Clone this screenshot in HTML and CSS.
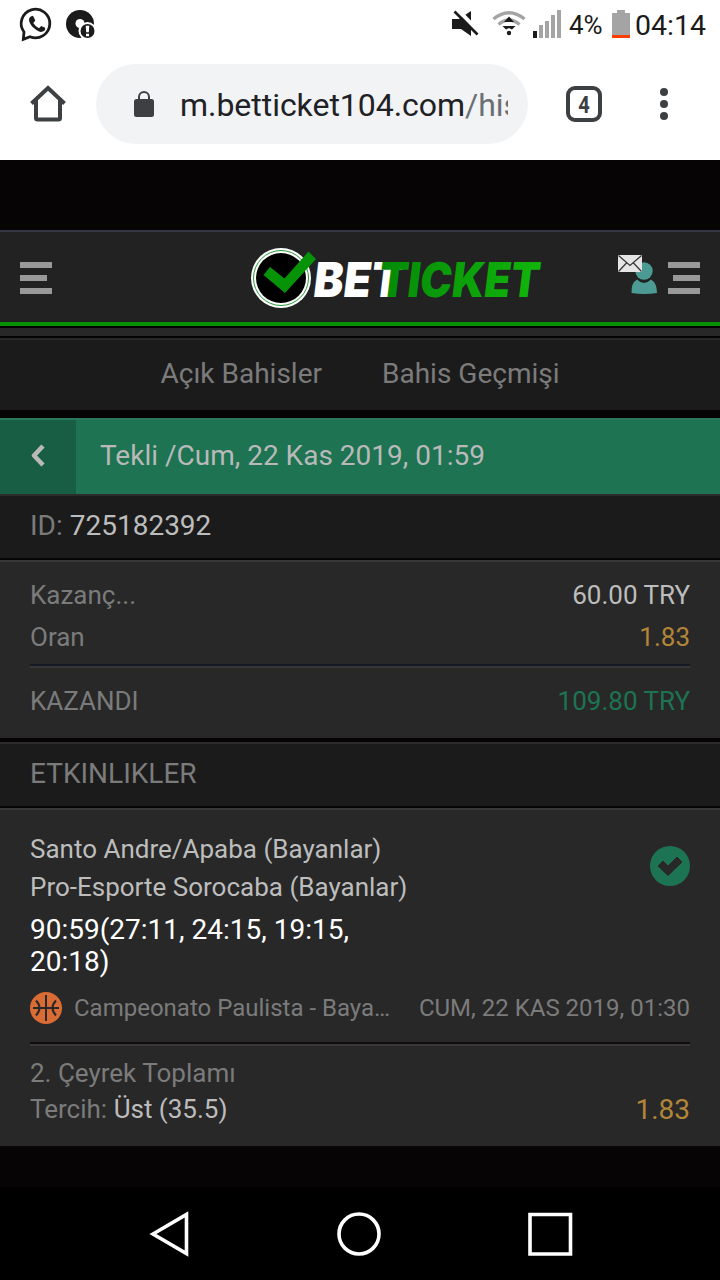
FILE: index.html
```html
<!DOCTYPE html>
<html lang="tr">
<head>
<meta charset="utf-8">
<title>Betticket</title>
<link rel="stylesheet" href="styles.css">
</head>
<body>
<div class="status">
  <svg class="status-left" width="110" height="48" viewBox="-1 0 110 48">
    <path d="M23 32A14.3 14.3 0 1 1 29 36.7L22.3 39.3Z" fill="none" stroke="#1b1b1b" stroke-width="2.8"/>
    <path d="M29 17.2l2-1.5q1 0 1.500 1l1.800 3.800-2 2.600q2 3.700 5.700 5.200l2.200-2.400 4 1.800q.5 4-4.500 4.200C34 30.500 28 24 28 20Q28 18 29 17.200Z" fill="#1b1b1b"/>
    <circle cx="79" cy="24" r="14" fill="#1b1b1b"/>
    <circle cx="79" cy="23.500" r="4.500" fill="#fff"/>
    <path d="M79 23.500l6 6" stroke="#fff" stroke-width="5"/>
    <circle cx="86.500" cy="31" r="9" fill="#fff"/>
    <circle cx="86.500" cy="31" r="7" fill="#1b1b1b"/>
    <path d="M84.700 25.800h3.600l-.5 6.500h-2.600zM85 33.800h3v2.500h-3z" fill="#fff"/>
  </svg>
  <svg class="status-right" width="118" height="48" viewBox="450 0 118 48">
    <path d="M452 19h7l12-8v25l-10-7h-9Z" fill="#1b1b1b"/>
    <path d="M457.500 9.500L480 33" stroke="#fff" stroke-width="4"/>
    <path d="M454.500 11.500L477.500 34.500" stroke="#1b1b1b" stroke-width="2.600"/>
    <path d="M493.500 19Q509 6.500 524.500 19M498.500 24.500Q509 15.500 519.500 24.500" fill="none" stroke="#a4a4a4" stroke-width="3.400"/>
    <path d="M509 16.500l5 5.500h-10Z" fill="#1b1b1b"/>
    <path d="M502.500 26h13l-3.500 3.500-3-1.500-3 1.500Z" fill="#1b1b1b"/>
    <circle cx="509" cy="33" r="2.200" fill="#1b1b1b"/>
    <path d="M533 31h4v7h-4z" fill="#1b1b1b"/>
    <path d="M539 25h4v13h-4zM545 21h4v17h-4zM551 15h4v23h-4zM557 10h4v28h-4z" fill="#a4a4a4"/>
  </svg>
  <span class="percent">4%</span>
  <svg class="battery" width="18" height="48" viewBox="0 0 18 48"><path d="M5 10h8v3h5v22H0V13h5Z" fill="#a4a4a4"/><path d="M0 35h18v3H0z" fill="#ff3d00"/></svg>
  <span class="clock">04:14</span>
</div>
<div class="toolbar">
  <svg class="home" width="36" height="38" viewBox="0 0 36 38"><path d="M1.500 19.500L18 4 34.500 19.500M6 16V34q0 1.500 1.500 1.500h21q1.500 0 1.500-1.500V16" fill="none" stroke="#3c4043" stroke-width="4"/></svg>
  <div class="address">
    <svg class="lock" width="20" height="28" viewBox="0 0 20 28"><rect y="9" width="20" height="18" rx="2.500" fill="#3c4043"/><path d="M5 10V7a5 5 0 0 1 10 0v3" fill="none" stroke="#3c4043" stroke-width="2"/></svg>
    <div class="url">m.betticket104.com<span class="path">/history</span></div>
  </div>
  <svg class="tab-count" width="36" height="36" viewBox="0 0 36 36"><rect x="2" y="2" width="32" height="32" rx="7" fill="none" stroke="#3c4043" stroke-width="4"/><text class="tab-number" x="12.300" y="27" textLength="11.500" lengthAdjust="spacingAndGlyphs">4</text></svg>
  <svg class="more" width="8" height="36" viewBox="0 0 8 36"><circle cx="4" cy="6" r="4"/><circle cx="4" cy="18" r="4"/><circle cx="4" cy="30" r="4"/></svg>
</div>
<main class="page">
  <header class="site-header">
    <svg width="32" height="32" viewBox="0 0 32 32"><path d="M0 0h32v6H0zM0 13h27v6H0zM0 26h32v6H0z" fill="#999"/></svg>
    <svg class="logo" width="294" height="64" viewBox="250 246 294 64">
      <defs><linearGradient id="leaf" gradientUnits="userSpaceOnUse" x1="65" y1="0" x2="229" y2="0"><stop offset="0" stop-color="#058a08"/><stop offset="1" stop-color="#11b60b"/></linearGradient></defs>
      <circle cx="281" cy="278" r="30" fill="#fff"/>
      <circle cx="281" cy="278" r="27.500" fill="none" stroke="#279b35" stroke-width="1"/>
      <circle cx="281" cy="278" r="25" fill="#000"/>
      <path d="M263.500 275L270 267l14.500 11.500 24-27 7.500 7.500-31 34Z" fill="#079307"/>
      <g transform="translate(313 297) skewX(-7)">
        <text class="word" x="-1" y="0" textLength="88" lengthAdjust="spacingAndGlyphs" fill="#fff">BET</text>
        <text class="word" x="64" y="0" textLength="161" lengthAdjust="spacingAndGlyphs" fill="url(#leaf)">TICKET</text>
      </g>
    </svg>
    <svg class="account" width="84" height="44" viewBox="617 252 84 44">
      <circle cx="644" cy="271" r="8.700" fill="#4b9b94"/>
      <path d="M631.500 293q-.5-10 5.500-13.500 7 7 14 0 6 3.500 6 13.500-12.500 2-25.500 0Z" fill="#4b9b94"/>
      <rect x="618" y="255" width="24" height="17" fill="#e5e5e5"/>
      <path d="M618.500 255.500L630 265.500 641.500 255.500M618.500 271.500l8-8.500M641.500 271.500l-8-8.500" fill="none" stroke="#333" stroke-width="1.200"/>
      <path d="M668 262h32v6h-32zM673 275h27v6h-27zM668 288h32v6h-32z" fill="#999"/>
    </svg>
  </header>
  <div class="strip"></div>
  <nav class="tabs"><span class="open-bets">Açık Bahisler</span><span class="history">Bahis Geçmişi</span></nav>
  <div class="ticket-bar">
    <div class="back"><svg width="16" height="24" viewBox="0 0 16 24"><path d="M13 2L4 11.500 13 21" fill="none" stroke="#b9b9b9" stroke-width="4.600" stroke-linejoin="round"/></svg></div>
    <div class="ticket-title">Tekli /Cum, 22 Kas 2019, 01:59</div>
  </div>
  <div class="caption id-row"><span>ID: <b>725182392</b></span></div>
  <section class="summary">
    <div class="line"><span>Kazanç...</span><span class="bright">60.00 TRY</span></div>
    <div class="line"><span>Oran</span><span class="gold">1.83</span></div>
    <div class="rule navy"></div>
    <div class="line total"><span>KAZANDI</span><span class="green">109.80 TRY</span></div>
  </section>
  <div class="caption events"><span>ETKINLIKLER</span></div>
  <section class="event">
    <div class="match">
      <div class="teams">
        <div class="team">Santo Andre/Apaba (Bayanlar)</div>
        <div class="team">Pro-Esporte Sorocaba (Bayanlar)</div>
        <div class="score">90:59(27:11, 24:15, 19:15, 20:18)</div>
      </div>
      <svg class="won" width="40" height="40" viewBox="0 0 40 40"><circle cx="20" cy="20" r="20" fill="#1d7453"/><path d="M8 20l5-5 5 5 9-9 5 5L18 29.500Z" fill="#282828" stroke="#282828" stroke-linejoin="round"/></svg>
    </div>
    <div class="league">
      <svg width="32" height="32" viewBox="0 0 32 32"><circle cx="16" cy="16" r="16" fill="#d96b35"/><path d="M16 3v26M3 16h26M6 8.500q7 7.500 0 15M26 8.500q-7 7.500 0 15" fill="none" stroke="#282828" stroke-width="2"/></svg>
      <span class="league-name">Campeonato Paulista - Baya…</span>
      <span class="date">CUM, 22 KAS 2019, 01:30</span>
    </div>
    <div class="rule"></div>
    <div class="market">2. Çeyrek Toplamı</div>
    <div class="line pick"><span>Tercih: <span class="bright">Üst (35.5)</span></span><span class="gold odds">1.83</span></div>
  </section>
</main>
<div class="system-nav">
  <svg width="720" height="93" viewBox="0 0 720 93" fill="none" stroke="#fff" stroke-width="3.600"><path d="M153 47L186.500 27.500V66.500Z"/><circle cx="359" cy="47" r="20"/><path d="M530 27.500h40.500V67H530Z"/></svg>
</div>
</body>
</html>
```
FILE: styles.css
```css
* { box-sizing: border-box; }
body { margin: 0; width: 720px; height: 1280px; overflow: hidden; background: #060405; color: #7b7b7b; font-family: Roboto, sans-serif; font-size: 26px; }
svg { display: block; flex: none; }
b { font-weight: 400; color: #bdbdbd; }
.status { display: flex; height: 48px; background: #fff; color: #1b1b1b; line-height: 50px; white-space: nowrap; }
.status-right { margin-left: 340px; }
.percent { width: 44px; padding-left: 1px; font-size: 26px; }
.clock { padding-left: 5px; font-size: 28.500px; line-height: 51px; }
.toolbar { display: flex; align-items: center; height: 112px; padding-left: 30px; background: #fff; }
.home { margin-top: -2px; }
.address { display: flex; align-items: center; width: 432px; height: 80px; margin-left: 30px; padding-left: 38px; border-radius: 40px; background: #f1f3f5; }
.url { width: 328px; margin-left: 26px; overflow: hidden; color: #202124; font-size: 32px; letter-spacing: -0.04px; line-height: 48px; white-space: nowrap; padding-top: 2px; }
.path { color: #6b6f74; }
.tab-count { margin-left: 38px; }
.tab-number { fill: #3c4043; font: bold 24px Roboto, sans-serif; }
.more { margin-left: 58px; fill: #3c4043; }
.page { height: 1027px; padding-top: 70px; }
.site-header { display: flex; align-items: center; height: 96px; padding: 2px 19px 0 20px; border-top: 2px solid #363744; border-bottom: 4px solid #079307; background: #222; }
.logo { margin-left: 198px; overflow: visible; }
.word { font: 900 48px Inter, sans-serif; }
.account { margin: -8px 0 0 73px; }
.strip { height: 12px; border: solid #050304; border-width: 2px 0; background: #282828; }
.tabs { display: flex; height: 72px; padding-left: 160.500px; border-top: 2px solid #2a292a; background: #1b1b1b; font-size: 28px; line-height: 68px; white-space: nowrap; }
.open-bets { width: 221.500px; }
.ticket-bar { display: flex; height: 76px; margin-top: 8px; border-top: 2px solid #2b775b; background: #1d7352; color: #b9b9b9; }
.back { display: flex; align-items: center; width: 76px; padding: 0 0 2px 30px; background: #185e44; }
.ticket-title { padding-left: 24px; font-size: 28px; line-height: 72px; white-space: nowrap; }
.caption { height: 64px; padding-left: 30px; border-top: 2px solid #2b2b2b; background: #1b1b1b; font-size: 28px; line-height: 60px; }
.summary { height: 178px; margin-top: 2px; padding: 12px 30px 0; border-top: 2px solid #373737; background: #282828; }
.line { display: flex; justify-content: space-between; line-height: 42px; }
.bright { color: #bdbdbd; }
.gold { color: #b38539; }
.green { color: #1d7453; }
.rule { height: 4px; border-top: 2px solid #100b0e; background: #373737; }
.navy { margin-top: 6px; border-color: #141824; }
.total { line-height: 66px; }
.events { margin-top: 4px; }
.event { height: 338px; margin-top: 2px; padding: 20px 30px 0; border-top: 2px solid #373737; background: #282828; }
.match { display: flex; justify-content: space-between; color: #bdbdbd; }
.teams { width: 390px; line-height: 38px; white-space: nowrap; }
.score { width: 340px; margin-top: 8px; color: #fff; font-size: 28px; line-height: 32px; white-space: normal; }
.won { margin-top: 16px; }
.league { display: flex; align-items: center; height: 32px; margin-top: 14px; font-size: 24px; white-space: nowrap; }
.league-name { margin-left: 12px; }
.date { margin-left: auto; }
.league + .rule { margin-top: 18px; }
.market { margin-top: 9px; line-height: 36px; }
.pick { line-height: 36px; }
.odds { font-size: 28px; line-height: 38px; }
.system-nav { height: 93px; background: #000; }
```
